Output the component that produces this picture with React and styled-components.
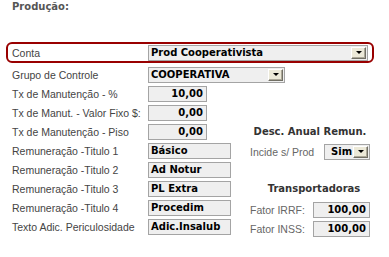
import styled, { createGlobalStyle } from "styled-components";

const GlobalStyle = createGlobalStyle`
  body {
    margin: 0;
    background: #fff;
    font-family: "Liberation Sans", Arial, sans-serif;
  }
`;

const Page = styled.div`
  width: 389px;
  height: 257px;
  padding-top: 1px;
  box-sizing: border-box;
`;

const Heading = styled.div`
  margin-left: 12px;
  font: bold 10px/12px "DejaVu Sans", sans-serif;
  color: #555;
`;

const ContaBox = styled.div`
  margin: 29px 0 0 6px;
  width: 368px;
  height: 21px;
  box-sizing: border-box;
  border: 2px solid #990000;
  border-radius: 6px;
  padding: 0 4px;
  display: flex;
  align-items: center;
`;

const Form = styled.div`
  margin-top: 2px;
  padding-left: 12px;
  display: grid;
  grid-template-columns: 136px 102px 120px;
  grid-auto-rows: 19px;
  align-items: center;
`;

const Label = styled.div`
  width: ${(p) => (p.$w ? p.$w + "px" : "auto")};
  font-size: 10.5px;
  color: ${(p) => (p.$soft ? "#666" : "#444")};
  white-space: nowrap;
  flex-shrink: 0;
`;

const Field = styled.div`
  width: ${(p) => p.$w}px;
  height: 16px;
  box-sizing: border-box;
  border: 1px solid #a4a4a4;
  background: #efefef;
  padding: 0 ${(p) => (p.$num ? "3px" : "2px")};
  font: bold 10px/14px "DejaVu Sans", sans-serif;
  color: #000;
  text-align: ${(p) => (p.$num ? "right" : "left")};
  white-space: nowrap;
  overflow: hidden;
`;

const Select = styled.div`
  width: ${(p) => p.$w}px;
  height: 16px;
  box-sizing: border-box;
  border: 1px solid #a4a4a4;
  background: #efefef;
  display: flex;
  align-items: center;
  justify-content: space-between;
  padding: 0 1px 0 ${(p) => (p.$pad ? p.$pad : 2)}px;
  font: bold 10px/14px "DejaVu Sans", sans-serif;
  color: #000;
  white-space: nowrap;
`;

const ArrowButton = styled.span`
  width: 15px;
  height: 12px;
  box-sizing: border-box;
  border: 1px solid;
  border-color: #fff #716f64 #716f64 #fff;
  box-shadow: inset -1px -1px 0 #aca899;
  background: #ece9d8;
  display: flex;
  align-items: center;
  justify-content: center;
  &::after {
    content: "";
    border-left: 3px solid transparent;
    border-right: 3px solid transparent;
    border-top: 3px solid #000;
  }
`;

const SectionTitle = styled.div`
  text-align: center;
  font: bold 10px/12px "DejaVu Sans", sans-serif;
  color: #333;
  padding-left: ${(p) => p.$shift || 0}px;
`;

const Pair = styled.div`
  display: flex;
  align-items: center;
  justify-content: space-between;
  padding-top: ${(p) => p.$drop || 0}px;
`;

function Dropdown({ w, children, pad }) {
  return (
    <Select $w={w} $pad={pad}>
      <span>{children}</span>
      <ArrowButton />
    </Select>
  );
}

const leftRows = [
  ["Grupo de Controle", "select", "COOPERATIVA", 137],
  ["Tx de Manutenção - %", "num", "10,00", 59],
  ["Tx de Manut. - Valor Fixo $:", "num", "0,00", 59],
  ["Tx de Manutenção - Piso", "num", "0,00", 59],
  ["Remuneração -Titulo 1", "text", "Básico", 83],
  ["Remuneração -Titulo 2", "text", "Ad Notur", 83],
  ["Remuneração -Titulo 3", "text", "PL Extra", 83],
  ["Remuneração -Titulo 4", "text", "Procedim", 83],
  ["Texto Adic. Periculosidade", "text", "Adic.Insalub", 83],
];

function rightCell(i) {
  if (i === 3) return <SectionTitle>Desc. Anual Remun.</SectionTitle>;
  if (i === 4)
    return (
      <Pair $drop={2}>
        <Label $soft>Incide s/ Prod</Label>
        <Dropdown w={46} pad={6}>Sim</Dropdown>
      </Pair>
    );
  if (i === 6) return <SectionTitle $shift={8}>Transportadoras</SectionTitle>;
  if (i === 7)
    return (
      <Pair $drop={4}>
        <Label $soft>Fator IRRF:</Label>
        <Field $w={57} $num>100,00</Field>
      </Pair>
    );
  if (i === 8)
    return (
      <Pair $drop={4}>
        <Label $soft>Fator INSS:</Label>
        <Field $w={57} $num>100,00</Field>
      </Pair>
    );
  return null;
}

export default function App() {
  return (
    <Page>
      <GlobalStyle />
      <Heading>Produção:</Heading>
      <ContaBox>
        <Label $w={136}>Conta</Label>
        <Dropdown w={220}>Prod Cooperativista</Dropdown>
      </ContaBox>
      <Form>
        {leftRows.map(([label, kind, value, w], i) => [
          <Label key={"l" + i}>{label}</Label>,
          <div key={"v" + i}>
            {kind === "select" ? (
              <Dropdown w={w}>{value}</Dropdown>
            ) : (
              <Field $w={w} $num={kind === "num"}>
                {value}
              </Field>
            )}
          </div>,
          <div key={"r" + i}>{rightCell(i)}</div>,
        ])}
      </Form>
    </Page>
  );
}
